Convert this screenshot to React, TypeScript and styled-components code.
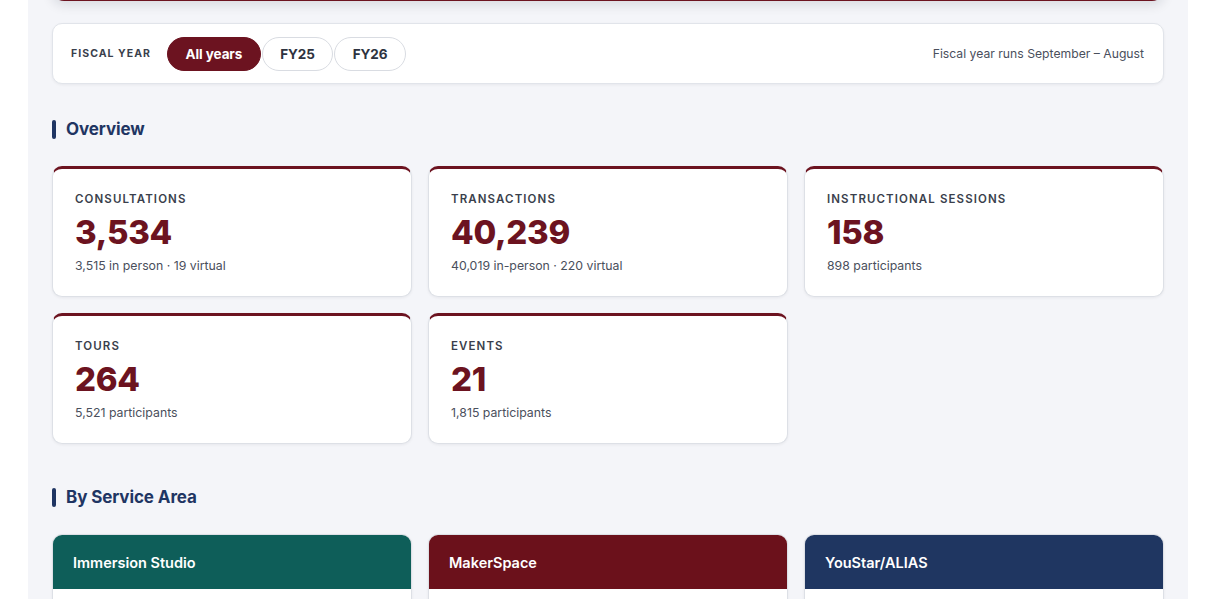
import React from "react";
import styled, { createGlobalStyle } from "styled-components";

const GlobalStyle = createGlobalStyle`
  * { box-sizing: border-box; }
  body {
    margin: 0;
    background: #ffffff;
    font-family: Inter, "Liberation Sans", sans-serif;
    color: #1f2430;
    -webkit-font-smoothing: antialiased;
  }
`;

const maroon = "#6c1320";
const navy = "#1f3563";

type Stat = { label: string; value: string; note: string };

const stats: Stat[] = [
  { label: "Consultations", value: "3,534", note: "3,515 in person · 19 virtual" },
  { label: "Transactions", value: "40,239", note: "40,019 in-person · 220 virtual" },
  { label: "Instructional Sessions", value: "158", note: "898 participants" },
  { label: "Tours", value: "264", note: "5,521 participants" },
  { label: "Events", value: "21", note: "1,815 participants" },
];

const areas = [
  { name: "Immersion Studio", color: "#0e5e59" },
  { name: "MakerSpace", color: "#6b111b" },
  { name: "YouStar/ALIAS", color: "#1f3661" },
];

const years = ["All years", "FY25", "FY26"];

const App: React.FC = () => {
  return (
    <>
      <GlobalStyle />
      <Page>
        <Header />
        <FilterBar>
          <FilterGroup>
            <FilterLabel>Fiscal Year</FilterLabel>
            <Pills>
              {years.map((y, i) => (
                <Pill key={y} $active={i === 0}>{y}</Pill>
              ))}
            </Pills>
          </FilterGroup>
          <FilterNote>Fiscal year runs September – August</FilterNote>
        </FilterBar>

        <Section>
          <SectionTitle>Overview</SectionTitle>
          <Grid>
            {stats.map((s) => (
              <StatCard key={s.label}>
                <StatLabel>{s.label}</StatLabel>
                <StatValue>{s.value}</StatValue>
                <StatNote>{s.note}</StatNote>
              </StatCard>
            ))}
          </Grid>
        </Section>

        <Section>
          <SectionTitle>By Service Area</SectionTitle>
          <Grid>
            {areas.map((a) => (
              <AreaCard key={a.name}>
                <AreaHead $color={a.color}>{a.name}</AreaHead>
                <AreaBody />
              </AreaCard>
            ))}
          </Grid>
        </Section>
      </Page>
    </>
  );
};

const Page = styled.main`
  width: 1160px;
  margin: 0 0 0 28px;
  padding: 0 24px 40px;
  background: #f4f5f9;
  min-height: 100vh;
`;

const Header = styled.header`
  height: 140px;
  margin-top: -139px;
  margin-bottom: 22px;
  background: ${maroon};
  border-radius: 0 0 12px 12px;
  box-shadow: 0 4px 12px rgba(20, 24, 40, 0.12);
`;

const FilterBar = styled.div`
  height: 61px;
  display: flex;
  align-items: center;
  justify-content: space-between;
  padding: 0 19px 0 18px;
  background: #ffffff;
  border: 1px solid #e1e4ea;
  border-radius: 10px;
  box-shadow: 0 1px 3px rgba(20, 24, 40, 0.06);
`;

const FilterGroup = styled.div`
  display: flex;
  align-items: center;
  gap: 16px;
`;

const FilterLabel = styled.span`
  font-size: 10.5px;
  font-weight: 700;
  letter-spacing: 1.05px;
  text-transform: uppercase;
  color: #3a3f4c;
`;

const Pills = styled.div`
  display: flex;
  gap: 1px;
`;

const Pill = styled.button<{ $active?: boolean }>`
  height: 34px;
  padding: 0 17.5px;
  border-radius: 17px;
  font-family: inherit;
  font-size: 13.5px;
  font-weight: 700;
  letter-spacing: -0.1px;
  cursor: pointer;
  border: 1px solid ${(p) => (p.$active ? maroon : "#d9dce2")};
  background: ${(p) => (p.$active ? maroon : "#ffffff")};
  color: ${(p) => (p.$active ? "#ffffff" : "#2e3340")};
`;

const FilterNote = styled.span`
  font-size: 12.2px;
  color: #4a4f5c;
`;

const Section = styled.section`
  margin-top: 34px;
  margin-bottom: 42px;
  & + & {
    margin-top: 0;
  }
`;

const SectionTitle = styled.h2`
  margin: 0 0 26px;
  display: flex;
  align-items: center;
  gap: 10px;
  font-size: 17px;
  line-height: 22px;
  font-weight: 700;
  letter-spacing: -0.1px;
  color: ${navy};
  &::before {
    content: "";
    width: 4px;
    height: 19px;
    border-radius: 2px;
    background: ${navy};
  }
`;

const Grid = styled.div`
  display: grid;
  grid-template-columns: repeat(3, 1fr);
  gap: 16px;
`;

const StatCard = styled.div`
  height: 131px;
  padding: 22px 22px 0;
  background: #ffffff;
  border: 1px solid #dde0e6;
  border-top: 3px solid ${maroon};
  border-radius: 10px;
  box-shadow: 0 1px 3px rgba(20, 24, 40, 0.06);
`;

const StatLabel = styled.div`
  font-size: 11.5px;
  line-height: 16px;
  font-weight: 600;
  letter-spacing: 1.1px;
  text-transform: uppercase;
  color: #3a3f4c;
`;

const StatValue = styled.div`
  margin-top: 5px;
  font-size: 33px;
  line-height: 40px;
  font-weight: 800;
  color: ${maroon};
  letter-spacing: -0.3px;
`;

const StatNote = styled.div`
  margin-top: 6px;
  font-size: 12.3px;
  line-height: 16px;
  color: #4a4f5c;
`;

const AreaCard = styled.div`
  background: #ffffff;
  border: 1px solid #dde0e6;
  border-radius: 10px;
  overflow: hidden;
  box-shadow: 0 1px 3px rgba(20, 24, 40, 0.06);
`;

const AreaHead = styled.div<{ $color: string }>`
  height: 54px;
  display: flex;
  align-items: center;
  padding: 0 20px;
  background: ${(p) => p.$color};
  color: #ffffff;
  font-size: 14.5px;
  font-weight: 600;
`;

const AreaBody = styled.div`
  height: 160px;
`;

export default App;
